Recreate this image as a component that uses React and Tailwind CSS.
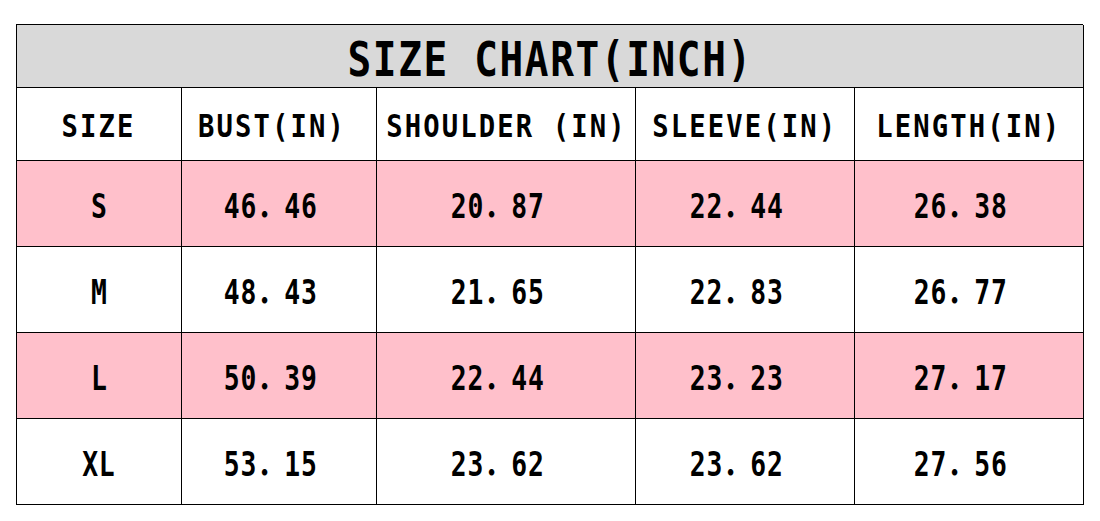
const rows = [
  { size: 'S', bust: '46．46', shoulder: '20．87', sleeve: '22．44', length: '26．38', pink: true },
  { size: 'M', bust: '48．43', shoulder: '21．65', sleeve: '22．83', length: '26．77', pink: false },
  { size: 'L', bust: '50．39', shoulder: '22．44', sleeve: '23．23', length: '27．17', pink: true },
  { size: 'XL', bust: '53．15', shoulder: '23．62', sleeve: '23．62', length: '27．56', pink: false },
];

const headers = ['SIZE', 'BUST(IN)', 'SHOULDER (IN)', 'SLEEVE(IN)', 'LENGTH(IN)'];

export default function App() {
  return (
    <div className="w-[1100px] h-[521px] bg-white pl-4 pt-6 font-['DejaVu_Sans_Mono','Noto_Sans_CJK_SC',monospace] font-bold text-black">
      <div className="grid w-[1067px] grid-cols-[165px_195px_259px_219px_229px] border-l border-t border-black">
        {/* Title */}
        <div className="col-span-5 flex h-[63px] items-center justify-center border-b border-r border-black bg-[#d9d9d9] pt-[6px] text-[48px]">
          <span className="inline-block scale-x-[0.82] whitespace-nowrap tracking-[2px]">SIZE CHART(INCH)</span>
        </div>

        {/* Column headers */}
        {headers.map((h, i) => (
          <div
            key={h}
            className={
              'flex h-[73px] items-center justify-center border-b border-r border-black pt-[4px] text-[32px] ' +
              (i === 1 ? 'pr-[14px]' : '')
            }
          >
            <span className="inline-block scale-x-[0.85] whitespace-nowrap tracking-[2.5px]">{h}</span>
          </div>
        ))}

        {/* Data rows */}
        {rows.map((r) =>
          [r.size, r.bust, r.shoulder, r.sleeve, r.length].map((v, i) => (
            <div
              key={r.size + i}
              className={
                'flex h-[86px] items-center justify-center border-b border-r border-black pt-[6px] text-[33px] ' +
                (i > 0 ? 'pr-4 ' : '') +
                (r.pink ? 'bg-[#ffc0cb]' : 'bg-white')
              }
            >
              <span className="inline-block scale-x-[0.8] whitespace-nowrap tracking-[1px]">{v}</span>
            </div>
          ))
        )}
      </div>
    </div>
  );
}
